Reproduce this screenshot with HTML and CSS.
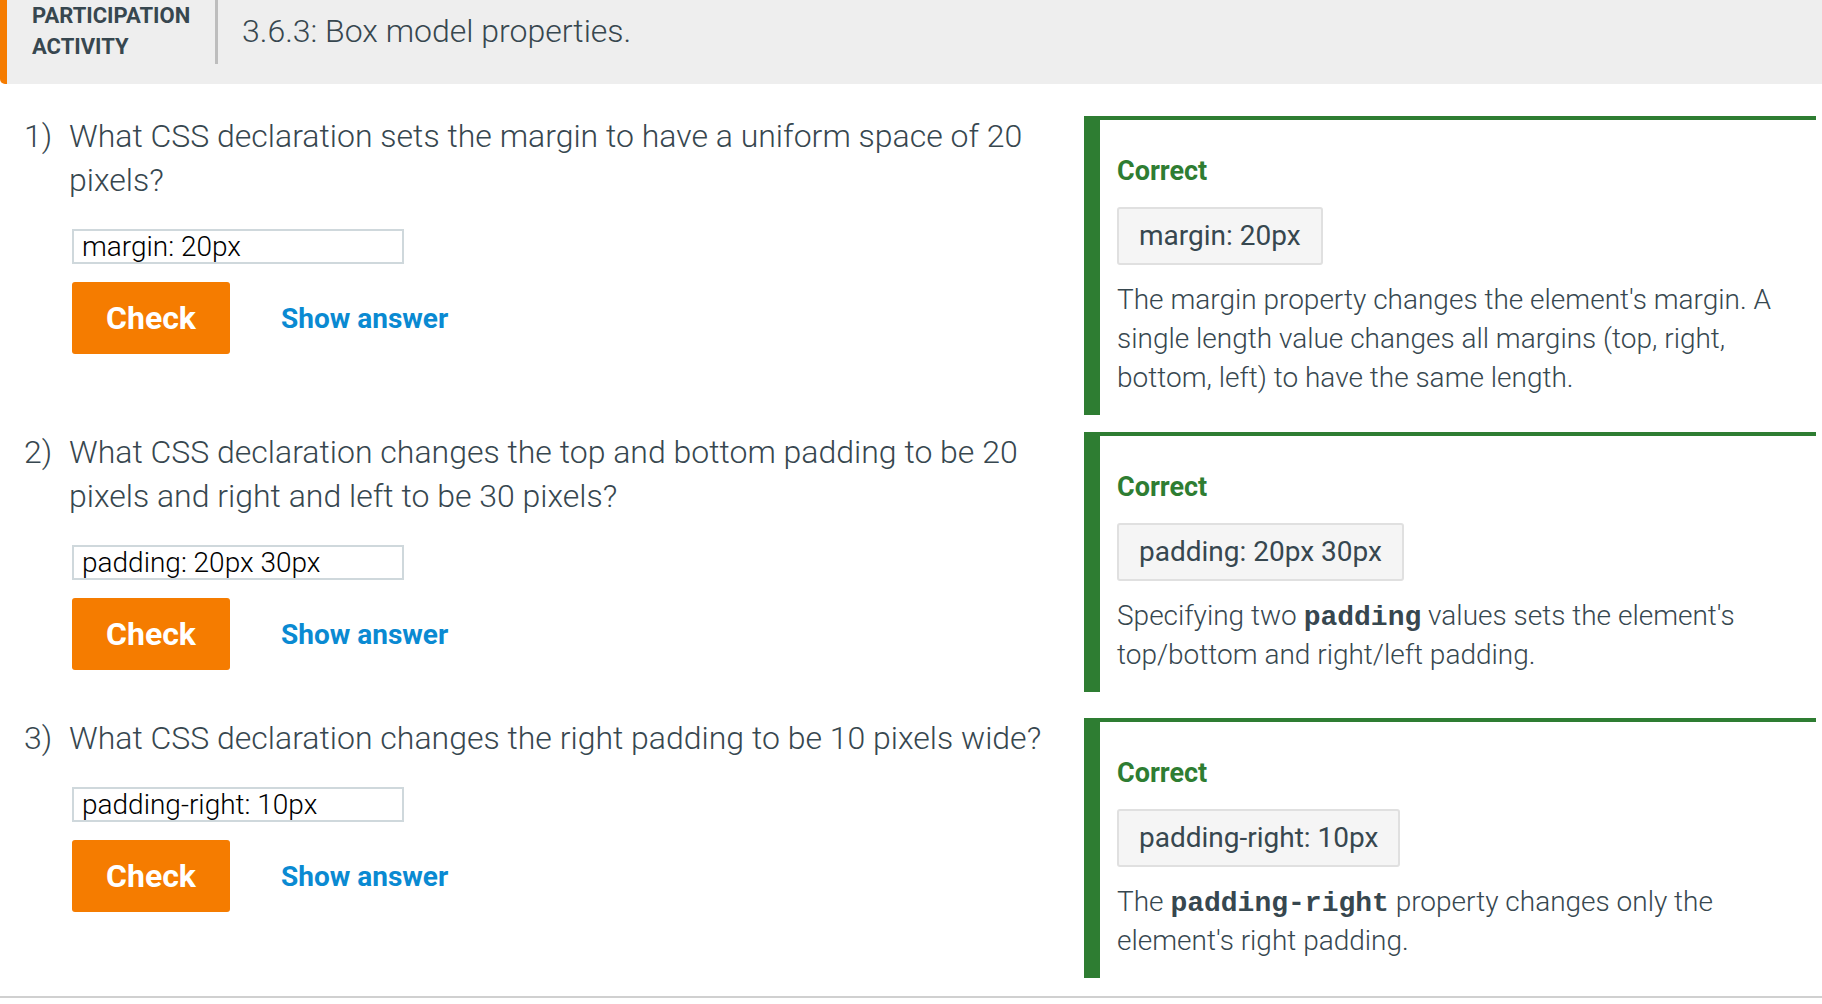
FILE: index.html
```html
<!DOCTYPE html>
<html lang="en">
<head>
<meta charset="utf-8">
<title>3.6.3: Box model properties.</title>
<link rel="stylesheet" href="styles.css">
</head>
<body>
<div class="activity">
  <header class="activity-header">
    <div class="activity-label">PARTICIPATION<br>ACTIVITY</div>
    <div class="activity-divider"></div>
    <h1 class="activity-title">3.6.3: Box model properties.</h1>
  </header>

  <div class="questions">
    <div class="row">
      <div class="question">
        <div class="prompt">
          <span class="num">1)</span>
          <p class="prompt-text">What CSS declaration sets the margin to have a uniform space of 20 pixels?</p>
        </div>
        <input class="answer" type="text" value="margin: 20px">
        <div class="actions">
          <button class="check">Check</button>
          <a class="show-answer">Show answer</a>
        </div>
      </div>
      <div class="feedback">
        <div class="status">Correct</div>
        <div class="solution">margin: 20px</div>
        <p class="explanation">The margin property changes the element's margin. A single length value changes all margins (top, right, bottom, left) to have the same length.</p>
      </div>
    </div>

    <div class="row row-spaced">
      <div class="question">
        <div class="prompt">
          <span class="num">2)</span>
          <p class="prompt-text">What CSS declaration changes the top and bottom padding to be 20 pixels and right and left to be 30 pixels?</p>
        </div>
        <input class="answer" type="text" value="padding: 20px 30px">
        <div class="actions">
          <button class="check">Check</button>
          <a class="show-answer">Show answer</a>
        </div>
      </div>
      <div class="feedback">
        <div class="status">Correct</div>
        <div class="solution">padding: 20px 30px</div>
        <p class="explanation">Specifying two <code>padding</code> values sets the element's top/bottom and right/left padding.</p>
      </div>
    </div>

    <div class="row">
      <div class="question">
        <div class="prompt">
          <span class="num">3)</span>
          <p class="prompt-text">What CSS declaration changes the right padding to be 10 pixels wide?</p>
        </div>
        <input class="answer" type="text" value="padding-right: 10px">
        <div class="actions">
          <button class="check">Check</button>
          <a class="show-answer">Show answer</a>
        </div>
      </div>
      <div class="feedback">
        <div class="status">Correct</div>
        <div class="solution">padding-right: 10px</div>
        <p class="explanation">The <code>padding-right</code> property changes only the element's right padding.</p>
      </div>
    </div>
  </div>
</div>
</body>
</html>
```

FILE: styles.css
```css
* {
  box-sizing: border-box;
}

html, body {
  margin: 0;
  padding: 0;
  background: #ffffff;
}

body {
  font-family: Roboto, "Liberation Sans", Arial, sans-serif;
  color: #37474f;
  overflow: hidden;
}

.activity {
  background: #ffffff;
  border-bottom: 2px solid #d0d0d0;
  box-shadow: 0 2px 3px rgba(0, 0, 0, 0.2);
  padding-bottom: 18px;
}

/* Header */
.activity-header {
  display: flex;
  align-items: flex-start;
  height: 84px;
  background: #eeeeee;
  border-left: 7px solid #f57c00;
  border-bottom-left-radius: 5px;
}

.activity-label {
  padding-left: 25px;
  width: 207px;
  font-size: 22px;
  line-height: 31px;
  font-weight: 700;
  color: #37474f;
}

.activity-divider {
  width: 3px;
  height: 64px;
  margin-left: 1px;
  background: #bdbdbd;
}

.activity-title {
  margin: 0 0 0 24px;
  padding-top: 12px;
  font-size: 32px;
  line-height: 38px;
  font-weight: 300;
  color: #37474f;
}

/* Questions */
.questions {
  display: flex;
  flex-direction: column;
  gap: 17px;
  padding-top: 32px;
}

.row {
  display: flex;
  align-items: flex-start;
}

.row-spaced {
  margin-bottom: 9px;
}

.question {
  width: 1084px;
  padding-left: 24px;
}

.prompt {
  display: flex;
  margin-top: -2px;
  font-size: 32px;
  line-height: 44px;
  font-weight: 300;
}

.num {
  width: 45px;
  flex: none;
}

.prompt-text {
  margin: 0;
  width: 990px;
}

.answer {
  display: block;
  margin: 27px 0 0 48px;
  width: 332px;
  height: 35px;
  padding: 0 8px;
  border: 2px solid #cfd8dc;
  border-radius: 0;
  font-family: Roboto, "Liberation Sans", Arial, sans-serif;
  font-size: 28px;
  font-weight: 300;
  color: #000000;
  background: #ffffff;
  outline: none;
}

.actions {
  display: flex;
  align-items: center;
  gap: 51px;
  margin: 18px 0 0 48px;
}

.check {
  width: 158px;
  height: 72px;
  border: none;
  border-radius: 3px;
  background: #f57c00;
  color: #ffffff;
  font-family: Roboto, "Liberation Sans", Arial, sans-serif;
  font-size: 32px;
  font-weight: 700;
  padding: 0;
}

.show-answer {
  color: #0a8ad2;
  font-size: 28px;
  font-weight: 700;
  cursor: pointer;
}

/* Feedback */
.feedback {
  width: 732px;
  border-left: 16px solid #2e7d32;
  border-top: 4px solid #2e7d32;
  padding: 35px 10px 18px 17px;
}

.status {
  font-size: 27px;
  line-height: 32px;
  font-weight: 700;
  color: #2e7d32;
}

.solution {
  display: inline-block;
  margin-top: 20px;
  padding: 10px 20px;
  border: 2px solid #e0e0e0;
  border-radius: 3px;
  background: #f5f5f5;
  font-size: 28px;
  line-height: 34px;
  font-weight: 400;
  color: #37474f;
}

.explanation {
  margin: 15px 0 0;
  font-size: 28px;
  line-height: 39px;
  font-weight: 300;
  color: #37474f;
}

.explanation code {
  font-family: "Liberation Mono", "Courier New", monospace;
  font-weight: 700;
  font-size: 28px;
  line-height: 1;
}
```
